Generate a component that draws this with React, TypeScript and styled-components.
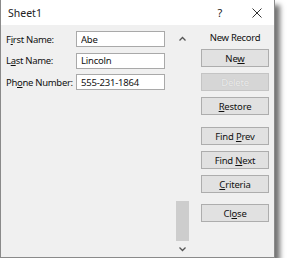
import React from "react";
import styled, { createGlobalStyle } from "styled-components";

const GlobalStyle = createGlobalStyle`
  html, body {
    margin: 0;
    padding: 0;
    background: #ffffff;
  }
  body {
    font-family: "Noto Sans", "Liberation Sans", sans-serif;
    font-size: 9.5px;
    letter-spacing: -0.3px;
    color: #000;
  }
`;

type FieldType = {
  pre: string;
  key: string;
  post: string;
  value: string;
};

const FIELDS: FieldType[] = [
  { pre: "F", key: "i", post: "rst Name:", value: "Abe" },
  { pre: "L", key: "a", post: "st Name:", value: "Lincoln" },
  { pre: "Ph", key: "o", post: "ne Number:", value: "555-231-1864" },
];

type ActionType = {
  pre: string;
  key: string;
  post: string;
  disabled?: boolean;
  gap: number;
};

const ACTIONS: ActionType[] = [
  { pre: "Ne", key: "w", post: "", gap: 4 },
  { pre: "Delete", key: "", post: "", disabled: true, gap: 6 },
  { pre: "", key: "R", post: "estore", gap: 6 },
  { pre: "Find ", key: "P", post: "rev", gap: 12 },
  { pre: "Find ", key: "N", post: "ext", gap: 6 },
  { pre: "", key: "C", post: "riteria", gap: 6 },
  { pre: "Cl", key: "o", post: "se", gap: 11 },
];

const App = () => {
  return (
    <>
      <GlobalStyle />
      <Window>
        <TitleBar>
          <Title>Sheet1</Title>
          <TitleControls>
            <Help>?</Help>
            <CloseIcon width="12" height="12" viewBox="0 0 12 12">
              <path d="M1.5 1.5 L10.5 10.5 M10.5 1.5 L1.5 10.5" stroke="#333" strokeWidth="1" fill="none" />
            </CloseIcon>
          </TitleControls>
        </TitleBar>
        <Body>
          <Form>
            {FIELDS.map((f) => (
              <Row key={f.value}>
                <Label>
                  {f.pre}
                  <u>{f.key}</u>
                  {f.post}
                </Label>
                <Input defaultValue={f.value} />
              </Row>
            ))}
          </Form>
          <ScrollBar>
            <Arrow width="9" height="6" viewBox="0 0 9 6">
              <polyline points="1.5,4.5 4.5,1.5 7.5,4.5" stroke="#555" strokeWidth="1.3" fill="none" />
            </Arrow>
            <Track>
              <Thumb />
            </Track>
            <Arrow width="9" height="6" viewBox="0 0 9 6">
              <polyline points="1.5,1.5 4.5,4.5 7.5,1.5" stroke="#555" strokeWidth="1.3" fill="none" />
            </Arrow>
          </ScrollBar>
          <Actions>
            <RecordLabel>New Record</RecordLabel>
            {ACTIONS.map((a) => (
              <Button key={a.pre + a.key + a.post} disabled={a.disabled} $gap={a.gap}>
                {a.pre}
                {a.key && <u>{a.key}</u>}
                {a.post}
              </Button>
            ))}
          </Actions>
        </Body>
      </Window>
    </>
  );
};

export default App;

const Window = styled.div`
  width: 275px;
  height: 258px;
  box-sizing: border-box;
  border: 1px solid #8a8a8a;
  border-top: none;
  background: #f0f0f0;
  box-shadow: 5px 5px 5px rgba(0, 0, 0, 0.55);
  display: flex;
  flex-direction: column;
`;

const TitleBar = styled.div`
  height: 25px;
  background: #ffffff;
  display: flex;
  align-items: center;
  justify-content: space-between;
  padding-left: 7px;
  padding-right: 11px;
`;

const Title = styled.div`
  font-size: 10.5px;
  letter-spacing: 0;
  color: #222;
`;

const TitleControls = styled.div`
  display: flex;
  align-items: center;
  gap: 29px;
`;

const Help = styled.div`
  font-size: 11px;
  color: #222;
`;

const CloseIcon = styled.svg`
  display: block;
`;

const Body = styled.div`
  flex: 1;
  display: flex;
  padding: 6px 0 4px 5px;
`;

const Form = styled.div`
  width: 159px;
  display: flex;
  flex-direction: column;
  gap: 5.5px;
`;

const Row = styled.div`
  display: flex;
  align-items: center;
  height: 16px;
`;

const Label = styled.div`
  width: 70px;
  color: #111;
  white-space: nowrap;
`;

const Input = styled.input`
  width: 89px;
  height: 16px;
  box-sizing: border-box;
  border: 1px solid #a9a9a9;
  background: #ffffff;
  font-family: "Noto Sans", "Liberation Sans", sans-serif;
  font-size: 9.5px;
  letter-spacing: -0.2px;
  padding: 0 0 0 4px;
  margin: 0;
  outline: none;
  color: #111;
`;

const ScrollBar = styled.div`
  margin-left: 11px;
  width: 13px;
  display: flex;
  flex-direction: column;
  align-items: center;
  padding: 5px 0 1px;
  gap: 2px;
`;

const Arrow = styled.svg`
  display: block;
  flex: none;
`;

const Track = styled.div`
  flex: 1;
  width: 13px;
  display: flex;
  flex-direction: column;
  justify-content: flex-end;
  padding-bottom: 3px;
`;

const Thumb = styled.div`
  height: 40px;
  background: #cdcdcd;
`;

const Actions = styled.div`
  margin-left: 12px;
  width: 68px;
  display: flex;
  flex-direction: column;
`;

const RecordLabel = styled.div`
  height: 14px;
  line-height: 14px;
  text-align: center;
  color: #111;
  white-space: nowrap;
`;

const Button = styled.button<{ $gap: number }>`
  margin-top: ${(p) => p.$gap}px;
  height: 18px;
  width: 68px;
  box-sizing: border-box;
  border: 1px solid #adadad;
  background: #e1e1e1;
  font-family: "Noto Sans", "Liberation Sans", sans-serif;
  font-size: 9.5px;
  letter-spacing: -0.2px;
  color: #111;
  padding: 0;
  line-height: 15px;

  &:disabled {
    background: #d6d6d6;
    border-color: #c4c4c4;
    color: #ececec;
    text-shadow: 0 0 1px #b8b8b8;
  }
`;
